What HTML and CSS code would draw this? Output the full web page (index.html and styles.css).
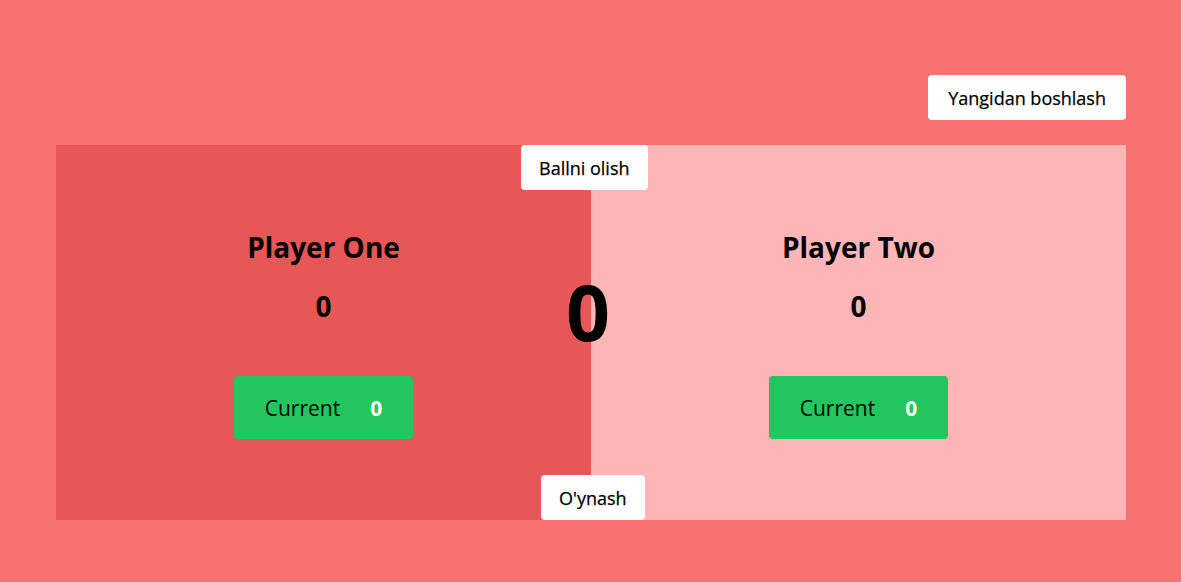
FILE: index.html
```html
<!DOCTYPE html>
<html>
<head>
<meta charset="utf-8">
<link rel="stylesheet" href="styles.css">
</head>
<body>
<div class="page">
  <div class="top">
    <button class="btn">Yangidan boshlash</button>
  </div>
  <div class="board">
    <div class="player p1">
      <h2 class="name">Player One</h2>
      <div class="score">0</div>
      <div class="current"><span class="cur-label">Current</span><span class="cur-val">0</span></div>
    </div>
    <div class="player p2">
      <h2 class="name">Player Two</h2>
      <div class="score">0</div>
      <div class="current"><span class="cur-label">Current</span><span class="cur-val">0</span></div>
    </div>
    <button class="btn hold">Ballni olish</button>
    <div class="dice">0</div>
    <button class="btn roll">O'ynash</button>
  </div>
</div>
</body>
</html>
```

FILE: styles.css
```css
* { box-sizing: border-box; }
html, body { margin: 0; padding: 0; }
body {
  background: #f87171;
  font-family: "Open Sans", "Noto Sans", sans-serif;
  color: #000;
  height: 582px;
  overflow: hidden;
}
.page {
  width: 1070px;
  margin: 0 auto;
  padding-top: 75px;
  position: relative;
  left: 0.5px;
}
.top {
  display: flex;
  justify-content: flex-end;
  height: 70px;
}
.btn {
  font-family: inherit;
  font-size: 18px;
  background: #fff;
  border: none;
  border-radius: 4px;
  height: 45px;
  padding: 0 18px;
  color: #000;
  -webkit-text-stroke: 0.25px #000;
}
.top .btn { padding: 0 20px; }
.board {
  position: relative;
  display: flex;
  height: 375px;
}
.player {
  flex: 1;
  display: flex;
  flex-direction: column;
  align-items: center;
  padding-top: 84px;
}
.p1 { background: #e75757; }
.p2 { background: #feb5b5; }
.name {
  margin: 0;
  font-size: 28px;
  font-weight: 700;
  line-height: 36px;
}
.score {
  margin-top: 23px;
  font-size: 28px;
  font-weight: 700;
  line-height: 36px;
}
.current {
  margin-top: 52px;
  width: 179px;
  height: 63px;
  background: #22c55e;
  border-radius: 4px;
  display: flex;
  align-items: center;
  justify-content: center;
  gap: 30px;
  font-size: 21px;
}
.cur-val { color: #fff; font-weight: 700; }
.hold {
  position: absolute;
  top: 0;
  left: 465px;
}
.roll {
  position: absolute;
  bottom: 0;
  left: 485px;
}
.dice {
  position: absolute;
  left: 510px;
  top: 122px;
  font-size: 77px;
  font-weight: 700;
  line-height: 90px;
}
```
